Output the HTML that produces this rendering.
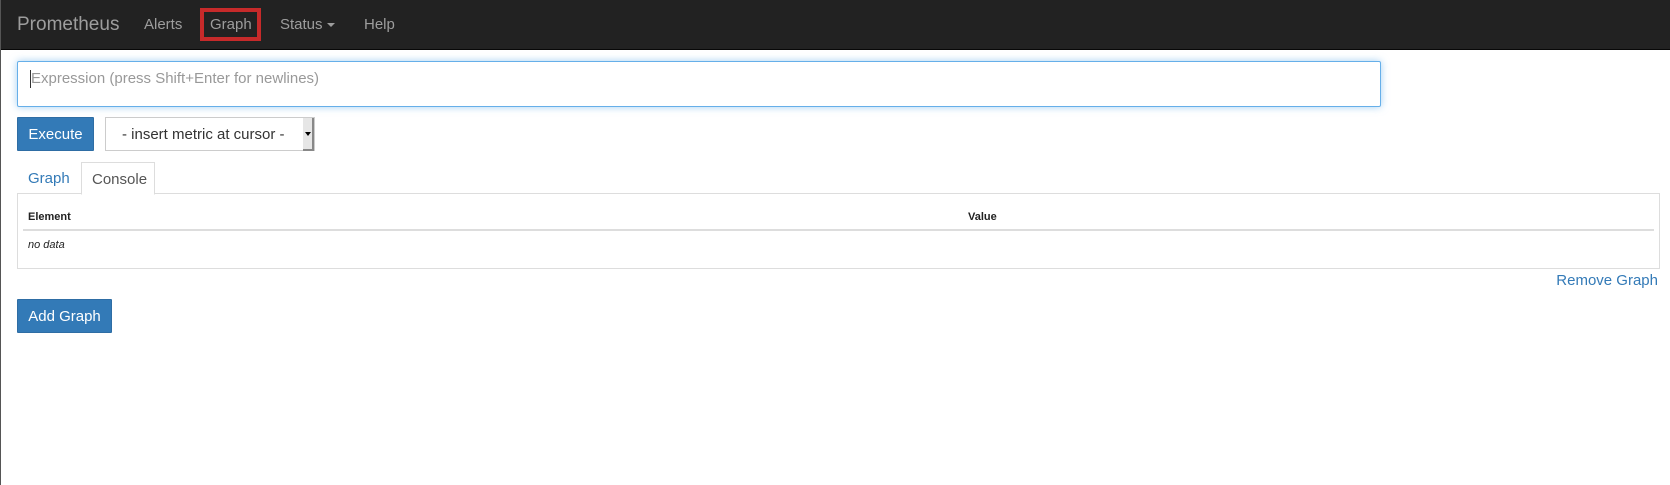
<!DOCTYPE html>
<html><head><meta charset="utf-8"><style>
*{box-sizing:border-box}
body{margin:0;width:1670px;height:485px;background:#fff;font-family:"Liberation Sans",sans-serif;font-size:15px;color:#333;border-left:1px solid #555;position:relative;overflow:hidden}
.nav{position:absolute;left:0;top:0;width:1670px;height:50px;background:#222;border-bottom:1px solid #080808}
.nav span{position:absolute;top:1px;line-height:48px;color:#9d9d9d}
.abs{position:absolute}
.btn{position:absolute;background:#337ab7;border:1px solid #2e6da4;color:#fff;text-align:center;font-size:15px;border-radius:1px}
</style></head><body>
<div class="nav">
<span style="left:16px;font-size:19px">Prometheus</span>
<span style="left:143px">Alerts</span>
<span style="left:209px">Graph</span>
<span style="left:279px">Status <span style="position:static;display:inline-block;border-left:4px solid transparent;border-right:4px solid transparent;border-top:4px solid #9d9d9d;vertical-align:middle"></span></span>
<span style="left:363px">Help</span>
<div class="abs" style="left:199px;top:8px;width:61px;height:33px;border:4px solid #c62a2a"></div>
</div>
<div class="abs" style="left:16px;top:61px;width:1364px;height:46px;border:1px solid #66afe9;box-shadow:0 0 8px rgba(102,175,233,.6);border-radius:2px"></div>
<div class="abs" style="left:29px;top:70px;width:1px;height:18px;background:#333"></div>
<div class="abs" style="left:30px;top:70px;color:#999;font-size:15px">Expression (press Shift+Enter for newlines)</div>
<div class="btn" style="left:16px;top:117px;width:77px;height:34px;line-height:34px">Execute</div>
<div class="abs" style="left:104px;top:117px;width:210px;height:34px;border:1px solid #ccc;line-height:34px;padding-left:16px;color:#333">- insert metric at cursor -</div>
<div class="abs" style="left:302px;top:118px;width:11px;height:33px;background:#e6e6e6;border-right:2px solid #888;border-bottom:2px solid #888"></div>
<div class="abs" style="left:304px;top:132px;border-left:3px solid transparent;border-right:3px solid transparent;border-top:4px solid #000"></div>
<div class="abs" style="left:16px;top:193px;width:1643px;height:76px;border:1px solid #ddd"></div>
<div class="abs" style="left:27px;top:170px;color:#337ab7">Graph</div>
<div class="abs" style="left:80px;top:162px;width:74px;height:33px;border:1px solid #ddd;border-bottom:1px solid #fff;background:#fff;padding:8px 0 0 10px;color:#555">Console</div>
<div class="abs" style="left:27px;top:211px;font-size:11px;font-weight:bold;color:#222">Element</div>
<div class="abs" style="left:967px;top:211px;font-size:11px;font-weight:bold;color:#222">Value</div>
<div class="abs" style="left:22px;top:229px;width:1631px;height:2px;background:#ddd"></div>
<div class="abs" style="left:27px;top:239px;font-size:11px;font-style:italic;color:#222">no data</div>
<div class="abs" style="right:12px;top:272px;color:#337ab7">Remove Graph</div>
<div class="btn" style="left:16px;top:299px;width:95px;height:34px;line-height:34px">Add Graph</div>
</body></html>
